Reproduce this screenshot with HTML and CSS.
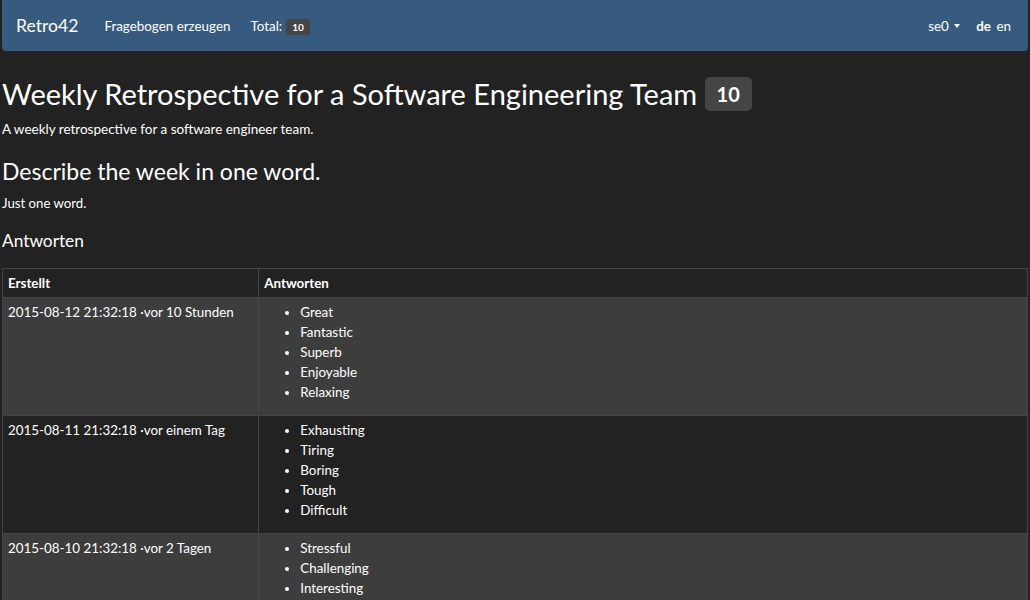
FILE: index.html
```html
<!DOCTYPE html>
<html lang="de">
<head>
<meta charset="utf-8">
<title>Retro42</title>
<link rel="stylesheet" href="styles.css">
</head>
<body>
<nav class="navbar">
  <div class="nav-left">
    <a class="brand">Retro42</a>
    <a class="nav-link">Fragebogen erzeugen</a>
    <span class="nav-text">Total: <span class="badge badge-sm">10</span></span>
  </div>
  <div class="nav-right">
    <a class="nav-link user">se0 <span class="caret"></span></a>
    <span class="langs"><b>de</b> <a class="lang">en</a></span>
  </div>
</nav>
<main class="content">
  <h1 class="title">Weekly Retrospective for a Software Engineering Team <span class="badge badge-lg">10</span></h1>
  <p class="desc">A weekly retrospective for a software engineer team.</p>
  <h2 class="question">Describe the week in one word.</h2>
  <p class="hint">Just one word.</p>
  <h3 class="section">Antworten</h3>
  <table class="answers">
    <thead>
      <tr><th class="col-date">Erstellt</th><th>Antworten</th></tr>
    </thead>
    <tbody>
      <tr class="odd">
        <td>2015-08-12 21:32:18 ·vor 10 Stunden</td>
        <td><ul><li>Great</li><li>Fantastic</li><li>Superb</li><li>Enjoyable</li><li>Relaxing</li></ul></td>
      </tr>
      <tr>
        <td>2015-08-11 21:32:18 ·vor einem Tag</td>
        <td><ul><li>Exhausting</li><li>Tiring</li><li>Boring</li><li>Tough</li><li>Difficult</li></ul></td>
      </tr>
      <tr class="odd">
        <td>2015-08-10 21:32:18 ·vor 2 Tagen</td>
        <td><ul><li>Stressful</li><li>Challenging</li><li>Interesting</li><li>Fun</li><li>Busy</li></ul></td>
      </tr>
    </tbody>
  </table>
</main>
</body>
</html>
```
FILE: styles.css
```css
html, body {
  margin: 0;
  padding: 0;
}
body {
  background: #222222;
  color: #ffffff;
  font-family: Lato, "Open Sans", "DejaVu Sans", sans-serif;
  font-size: 13.4px;
  line-height: 20px;
  padding: 0 2px;
}
.navbar {
  display: flex;
  justify-content: space-between;
  align-items: center;
  height: 51px;
  background: #375a7f;
  border-radius: 0 0 4px 4px;
  padding: 0 16px 0 14px;
}
.nav-left, .nav-right {
  display: flex;
  align-items: center;
}
.brand {
  font-size: 17.6px;
  margin-right: 26px;
}
.nav-link {
  color: #ffffff;
}
.nav-text {
  margin-left: 20px;
  display: flex;
  align-items: center;
}
.badge {
  display: inline-block;
  background: #464545;
  color: #ffffff;
  font-weight: bold;
  text-align: center;
  border-radius: 3px;
}
.badge-sm {
  font-size: 10px;
  line-height: 16px;
  padding: 0 6px;
  margin-left: 4px;
  margin-top: 3px;
}
.badge-lg {
  font-size: 20px;
  line-height: 34px;
  padding: 0 12px;
  border-radius: 5px;
  vertical-align: 3px;
}
.caret {
  display: inline-block;
  width: 0;
  height: 0;
  border-top: 4px solid #ffffff;
  border-left: 3.5px solid transparent;
  border-right: 3.5px solid transparent;
  vertical-align: 3px;
  margin-left: 2px;
}
.user {
  margin-right: 16px;
}
.langs {
  margin-right: 1px;
}
.langs b {
  font-weight: bold;
  margin-right: 2px;
}
.lang {
  color: #ffffff;
}
.content {
  padding: 0;
}
.title {
  font-size: 29px;
  font-weight: normal;
  line-height: 36px;
  margin: 25px 0 0;
}
.desc {
  font-size: 13.5px;
  margin: 7px 0 0;
}
.question {
  font-size: 23px;
  font-weight: normal;
  line-height: 28px;
  margin: 18px 0 0;
}
.hint {
  font-size: 13.2px;
  margin: 8px 0 0;
}
.section {
  font-size: 17.3px;
  font-weight: normal;
  line-height: 22px;
  margin: 17px 0 16px;
}
.answers {
  width: 100%;
  border-collapse: collapse;
  border: 1px solid #464545;
}
.answers th, .answers td {
  border: 1px solid #464545;
  padding: 4px 5px;
  text-align: left;
  vertical-align: top;
}
.answers th {
  font-weight: bold;
}
.col-date {
  width: 25%;
}
.answers tr.odd td {
  background: #3d3d3d;
}
.answers ul {
  margin: 0 0 9px;
  padding-left: 36px;
}
```
